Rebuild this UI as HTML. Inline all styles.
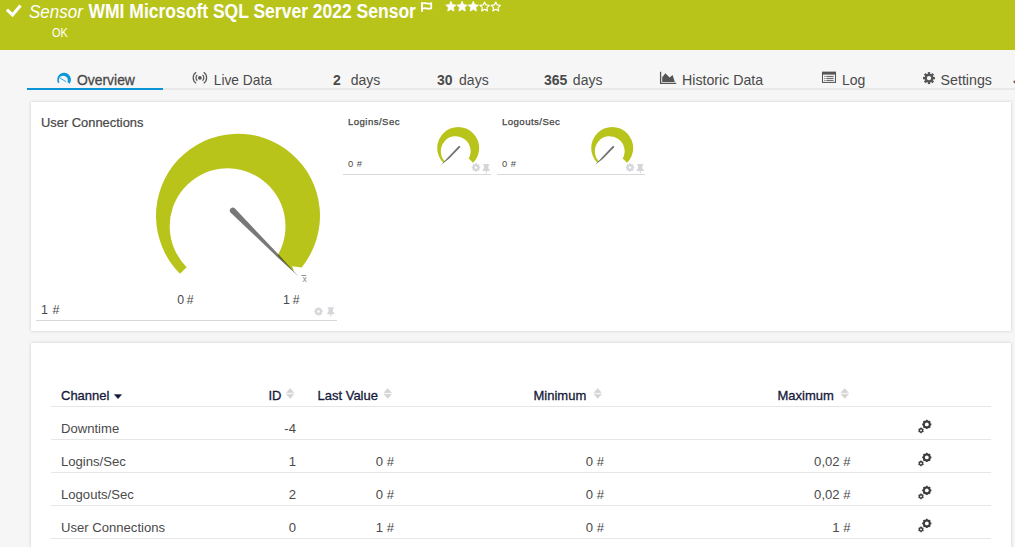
<!DOCTYPE html>
<html><head><meta charset="utf-8">
<style>
*{margin:0;padding:0;box-sizing:border-box}
html,body{width:1015px;height:547px;overflow:hidden;background:#f6f6f6;font-family:"Liberation Sans",sans-serif;position:relative}
.a{position:absolute;white-space:pre;line-height:1}
#hdr{position:absolute;left:0;top:0;width:1015px;height:50px;background:#b8c41a}
.tab{color:#4a4a4a;font-size:14px;top:73px}
.panel{position:absolute;background:#fff;box-shadow:0 0 3px rgba(0,0,0,.18)}
.th{color:#151a3a;font-size:13px;top:388.7px;-webkit-text-stroke:0.3px #151a3a}
.td{color:#4a4a4a;font-size:13.1px}
.hl{position:absolute;left:51px;width:940px;height:1px;background:#e6e6e6}
</style></head><body>
<div id="hdr"></div>
<svg class="a" style="left:0;top:0" width="520" height="50">
  <polyline points="6.9,9.6 12.5,14.9 20.5,5.4" fill="none" stroke="#fff" stroke-width="3.1" stroke-linecap="butt" stroke-linejoin="miter"/>
  <g fill="none" stroke="#fff" stroke-width="1.3">
    <path d="M422,2.2 V11.8" stroke-width="2"/>
    <path d="M423,3.4 C425.5,2.2 427.5,4.6 431.2,3.3 V8.4 C427.5,9.7 425.5,7.4 423,8.5" stroke-width="1.8"/>
  </g>
  <defs><path id="st" d="M0.00,-5.60 L1.62,-2.22 L5.33,-1.73 L2.62,0.85 L3.29,4.53 L0.00,2.75 L-3.29,4.53 L-2.62,0.85 L-5.33,-1.73 L-1.62,-2.22 Z"/>
  <path id="st2" d="M0.00,-4.90 L1.42,-1.94 L4.66,-1.51 L2.29,0.74 L2.88,3.96 L0.00,2.40 L-2.88,3.96 L-2.29,0.74 L-4.66,-1.51 L-1.42,-1.94 Z"/></defs>
  <g fill="#fff" stroke="#fff" stroke-width="0.5" stroke-linejoin="round">
    <use href="#st" x="450.9" y="6.7"/><use href="#st" x="462.1" y="6.7"/><use href="#st" x="473.3" y="6.7"/>
  </g>
  <g fill="none" stroke="#fff" stroke-width="1.2" stroke-linejoin="round">
    <use href="#st2" x="484.6" y="6.9"/><use href="#st2" x="495.8" y="6.9"/>
  </g>
</svg>
<div class="a" style="left:29px;top:2.8px;font-size:17px;font-style:italic;color:#fff;transform:scaleY(1.08);transform-origin:0 1.8px">Sensor</div>
<div class="a" style="left:88.5px;top:2px;font-size:17.5px;font-weight:bold;color:#fff;transform:scaleY(1.12);transform-origin:0 1px">WMI Microsoft SQL Server 2022 Sensor</div>
<div class="a" style="left:52.2px;top:26.9px;font-size:12px;color:#fff;transform:scaleX(0.91);transform-origin:0 0">OK</div>

<!-- tabs -->
<div style="position:absolute;left:27px;top:88px;width:988px;height:2px;background:#e9e9e9"></div>
<div style="position:absolute;left:27px;top:88px;width:136px;height:2px;background:#0a96d6"></div>
<svg class="a" style="left:0;top:60px" width="1015" height="30">
  <!-- overview gauge icon -->
  <g transform="translate(0,-60)"><path d="M58.12,83.15 A6.9,6.9 0 1 1 69.75,83.66 L67.38,81.99 A4.45,4.45 0 1 0 59.51,82.35 Z" fill="#0c98d8"/>
  <path d="M60.4,78.2 L65.7,81.5" stroke="#0c98d8" stroke-width="1" stroke-linecap="round" opacity=".85"/></g>
  <!-- live data icon -->
  <circle cx="199.9" cy="17.8" r="1.9" fill="#555"/>
  <path d="M197.29,14.90 A3.9,3.9 0 0 0 197.29,20.70 M202.51,14.90 A3.9,3.9 0 0 1 202.51,20.70 M196.06,12.31 A6.7,6.7 0 0 0 196.06,23.29 M203.74,12.31 A6.7,6.7 0 0 1 203.74,23.29" fill="none" stroke="#555" stroke-width="1.25"/>
  <!-- historic data icon -->
  <path d="M660.6,11.8 V23.4 H676.2" fill="none" stroke="#555" stroke-width="1.3"/>
  <path d="M662.2,22 V17.3 L665.4,13.3 L669.6,17.4 L672.6,15 L674.8,22 Z" fill="#555"/>
  <!-- log icon -->
  <rect x="822.5" y="12.3" width="13" height="10.1" fill="none" stroke="#555" stroke-width="1.05"/>
  <rect x="822" y="11.8" width="14" height="2.8" fill="#555"/>
  <g stroke="#555" stroke-width="0.95"><path d="M824.3,16.4h1.1M824.3,18.4h1.1M824.3,20.4h1.1M826.3,16.4h7.3M826.3,18.4h7.3M826.3,20.4h7.3"/></g>
  <!-- settings gear -->
  <g transform="translate(929,18.1)" fill="#555">
    <circle r="4.4"/>
    <rect x="-1.2" y="-6" width="2.4" height="12"/><rect x="-1.2" y="-6" width="2.4" height="12" transform="rotate(45)"/><rect x="-1.2" y="-6" width="2.4" height="12" transform="rotate(90)"/><rect x="-1.2" y="-6" width="2.4" height="12" transform="rotate(135)"/>
    <circle r="2.2" fill="#f6f6f6"/>
  </g>
  <rect x="1013.6" y="20.6" width="1.4" height="2.6" rx="0.6" fill="#8a4a3a"/>
</svg>
<div class="a tab" style="left:77px;font-size:13.9px;top:74.2px;-webkit-text-stroke:0.3px #4a4a4a">Overview</div>
<div class="a tab" style="left:213.8px;font-size:13.75px;top:74px">Live Data</div>
<div class="a tab" style="left:333px"><b>2</b><span style="margin-left:10px">days</span></div>
<div class="a tab" style="left:437px"><b>30</b><span style="margin-left:6.5px">days</span></div>
<div class="a tab" style="left:544px"><b>365</b><span style="margin-left:5.5px">days</span></div>
<div class="a tab" style="left:682px;font-size:14.2px;top:72.9px">Historic Data</div>
<div class="a tab" style="left:842px">Log</div>
<div class="a tab" style="left:940.5px;font-size:14.25px;top:72.9px">Settings</div>

<!-- panel 1 -->
<div class="panel" style="left:31px;top:102px;width:980px;height:229px"></div>
<div class="a" style="left:41px;top:117.3px;font-size:12.9px;color:#484848;-webkit-text-stroke:0.22px #484848">User Connections</div>
<div class="a" style="left:41px;top:303.5px;font-size:12.5px;word-spacing:1px;color:#4a4a4a">1 #</div>
<div class="a" style="left:177.2px;top:293.5px;font-size:12.3px;word-spacing:-0.6px;color:#4a4a4a">0 #</div>
<div class="a" style="left:283px;top:293.5px;font-size:12.3px;word-spacing:-0.6px;color:#4a4a4a">1 #</div>
<div style="position:absolute;left:36px;top:320px;width:301px;height:1px;background:#d8d8d8"></div>
<svg class="a" style="left:0;top:0" width="1015" height="340">
  <path d="M180.02,273.78 A82,82 0 1 1 301.7,267.4 L292.2,266.3 L293.8,271.6 L277.6,255.4 A57.9,57.9 0 1 0 186.66,267.14 Z" fill="#b8c41a"/>
  <path d="M230.75,212.75 A2.95,2.95 0 0 1 234.95,208.55 L279.5,255.6 L298,276 L277.7,257.4 Z" fill="rgba(0,0,0,.53)"/>
  <text x="302.5" y="282" font-size="8.6" fill="#888" font-family="Liberation Sans">x</text>
  <path d="M301.3,275.5h5" stroke="#888" stroke-width="0.9"/>
  <g fill="#d4d6da"><g transform="translate(-157.5,144)"><use href="#gpg"/></g><g transform="translate(-155.5,143.2)"><use href="#gpp"/></g></g>
</svg>

<!-- small widgets -->
<div class="a" style="left:348px;top:116.7px;font-size:9.6px;letter-spacing:0.45px;color:#444;-webkit-text-stroke:0.25px #444">Logins/Sec</div>
<div class="a" style="left:348px;top:159.4px;font-size:9.4px;word-spacing:1px;color:#4a4a4a">0 #</div>
<div style="position:absolute;left:343px;top:174px;width:148px;height:1px;background:#d8d8d8"></div>
<div class="a" style="left:502px;top:116.7px;font-size:9.6px;letter-spacing:0.45px;color:#444;-webkit-text-stroke:0.25px #444">Logouts/Sec</div>
<div class="a" style="left:502px;top:159.4px;font-size:9.4px;word-spacing:1px;color:#4a4a4a">0 #</div>
<div style="position:absolute;left:497px;top:174px;width:148px;height:1px;background:#d8d8d8"></div>
<svg class="a" style="left:0;top:0" width="1015" height="200">
  <defs>
    <g id="sg">
      <path d="M443.35,162.85 A21,21 0 1 1 473.05,162.85 L468.7,158.5 A14.9,14.9 0 1 0 444.85,161.35 Z" fill="#b8c41a"/>
      <path d="M458.5,146.2 A1,1 0 0 1 460,147.6 L449,158.8 L441,165 L447.8,157.6 Z" fill="rgba(0,0,0,.55)"/>
    </g>
    <g id="gp" fill="#d4d6da">
      <g id="gpg" transform="translate(476,167.5)"><circle r="3.3"/><rect x="-0.9" y="-4.2" width="1.8" height="8.4"/><rect x="-0.9" y="-4.2" width="1.8" height="8.4" transform="rotate(45)"/><rect x="-0.9" y="-4.2" width="1.8" height="8.4" transform="rotate(90)"/><rect x="-0.9" y="-4.2" width="1.8" height="8.4" transform="rotate(135)"/><circle r="1.3" fill="#fff"/></g>
      <path id="gpp" d="M483.3,164 h6 v1.3 h-0.9 v3.2 l1.3,1.2 v1.3 h-7 v-1.3 l1.3,-1.2 v-3.2 h-0.9z M485.8,171 h1 v2.6 h-1z"/>
    </g>
  </defs>
  <use href="#sg"/><use href="#gp"/>
  <use href="#sg" x="154"/><use href="#gp" x="154"/>
  </svg>

<!-- panel 2 -->
<div class="panel" style="left:31px;top:343px;width:980px;height:220px"></div>
<div class="a th" style="left:61px">Channel</div>
<svg class="a" style="left:0;top:380px" width="1015" height="30">
  <path d="M114.3,14.6 h7.4 l-3.7,4.1z" fill="#111638" stroke="#111638" stroke-width="0.4" stroke-linejoin="round"/>
  <g id="sort" fill="#d4d4d4" stroke="#d4d4d4" stroke-width="0.5" stroke-linejoin="round"><path d="M286.4,12.7 l3.8,-4.3 l3.8,4.3z M286.4,14.2 h7.6 l-3.8,4.3z"/></g>
  <use href="#sort" x="97.5"/><use href="#sort" x="307.5"/><use href="#sort" x="554.5"/>
</svg>
<div class="a th" style="left:268.5px">ID</div>
<div class="a th" style="left:317.5px">Last Value</div>
<div class="a th" style="left:533.5px">Minimum</div>
<div class="a th" style="left:777.5px">Maximum</div>
<div class="hl" style="top:406px"></div>
<div class="hl" style="top:439px"></div>
<div class="hl" style="top:472px"></div>
<div class="hl" style="top:505px"></div>
<div class="hl" style="top:538px"></div>

<div class="a td" style="left:61px;top:422.3px">Downtime</div>
<div class="a td" style="left:61px;top:455.3px">Logins/Sec</div>
<div class="a td" style="left:61px;top:488.3px">Logouts/Sec</div>
<div class="a td" style="left:61px;top:521.3px">User Connections</div>

<div class="a td" style="right:719px;top:422.3px">-4</div>
<div class="a td" style="right:719px;top:455.3px">1</div>
<div class="a td" style="right:719px;top:488.3px">2</div>
<div class="a td" style="right:719px;top:521.3px">0</div>

<div class="a td" style="right:621px;top:455.3px">0 #</div>
<div class="a td" style="right:621px;top:488.3px">0 #</div>
<div class="a td" style="right:621px;top:521.3px">1 #</div>

<div class="a td" style="right:411px;top:455.3px">0 #</div>
<div class="a td" style="right:411px;top:488.3px">0 #</div>
<div class="a td" style="right:411px;top:521.3px">0 #</div>

<div class="a td" style="right:164.5px;top:455.3px">0,02 #</div>
<div class="a td" style="right:164.5px;top:488.3px">0,02 #</div>
<div class="a td" style="right:164.5px;top:521.3px">1 #</div>

<svg class="a" style="left:0;top:0" width="1015" height="547">
  <defs>
    <g id="gears" fill="#3c3c3c">
      <g transform="translate(926.8,424.4)"><circle r="3.9"/><g><rect x="-0.9" y="-4.6" width="1.8" height="9.2"/><rect x="-0.9" y="-4.6" width="1.8" height="9.2" transform="rotate(45)"/><rect x="-0.9" y="-4.6" width="1.8" height="9.2" transform="rotate(90)"/><rect x="-0.9" y="-4.6" width="1.8" height="9.2" transform="rotate(135)"/></g><circle r="1.9" fill="#fff"/></g>
      <g transform="translate(921,430.4)"><circle r="2.3"/><rect x="-0.6" y="-2.9" width="1.2" height="5.8"/><rect x="-0.6" y="-2.9" width="1.2" height="5.8" transform="rotate(60)"/><rect x="-0.6" y="-2.9" width="1.2" height="5.8" transform="rotate(120)"/><circle r="0.9" fill="#fff"/></g>
    </g>
  </defs>
  <use href="#gears"/><use href="#gears" y="33"/><use href="#gears" y="66"/><use href="#gears" y="99"/>
</svg>
</body></html>
